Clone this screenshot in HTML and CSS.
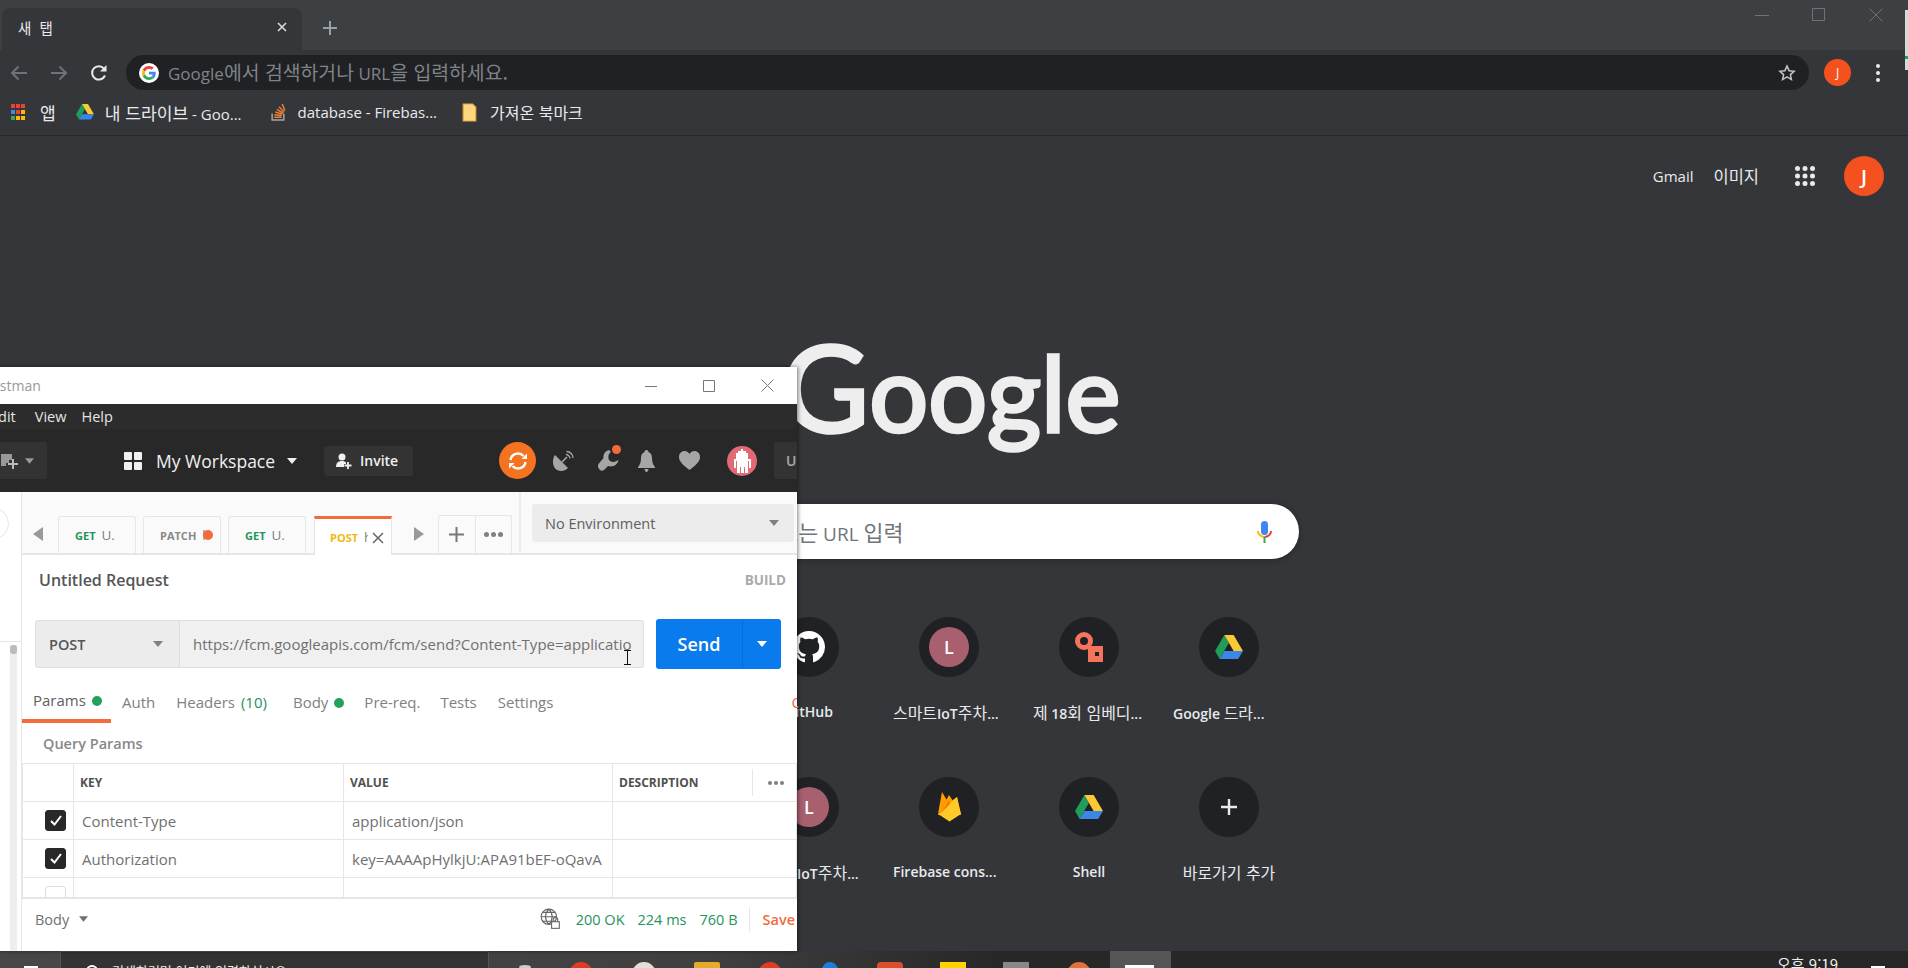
FILE: index.html
```html
<!DOCTYPE html>
<html lang="ko">
<head>
  <meta charset="UTF-8">
  <title>새 탭</title>
  <link rel="stylesheet" href="styles.css">
</head>
<body>

  <svg class="defs" width="0" height="0">
    <symbol id="drive" viewBox="0 0 87 78">
      <path fill="#1e9e5a" d="M29 0 0 50l14 25 29-50z"/>
      <path fill="#fcc934" d="M29 0h29l29 50H58z"/>
      <path fill="#3b87e8" d="M14 75l15-25h58L72 75z"/>
    </symbol>
    <symbol id="caret" viewBox="0 0 10 6">
      <path d="M0 0h10L5 6z"/>
    </symbol>
  </svg>

  <!-- Chrome tab strip -->
  <div class="tabstrip">
    <div class="tab">
      <span class="tab-title">새 탭</span>
      <svg class="tab-close" width="10" height="10" viewBox="0 0 10 10"><path d="M1 1l8 8M9 1 1 9" stroke="#dadce0" stroke-width="1.6"/></svg>
    </div>
    <svg class="new-tab" width="14" height="14" viewBox="0 0 14 14"><path d="M7 0v14M0 7h14" stroke="#9aa0a6" stroke-width="2"/></svg>
    <div class="win-controls">
      <svg width="14" height="14" viewBox="0 0 14 14"><path d="M0 7.500h14" stroke="#6f7276"/></svg>
      <svg width="14" height="14" viewBox="0 0 14 14"><path d="M.5.5h12v12H.5z" fill="none" stroke="#6f7276"/></svg>
      <svg width="14" height="14" viewBox="0 0 14 14"><path d="M.5.5l13 13M13.500.5l-13 13" stroke="#6f7276"/></svg>
    </div>
  </div>

  <!-- Chrome toolbar -->
  <div class="toolbar">
    <svg class="nav-icon" width="18" height="16" viewBox="0 0 18 16"><path d="M17 8H2M8.500 1.500 2 8l6.500 6.500" fill="none" stroke="#6f7276" stroke-width="2"/></svg>
    <svg class="nav-icon fwd" width="18" height="16" viewBox="0 0 18 16"><path d="M1 8h15M9.500 1.500 16 8l-6.500 6.500" fill="none" stroke="#6f7276" stroke-width="2"/></svg>
    <svg class="nav-icon reload" width="18" height="18" viewBox="0 0 18 18"><path d="M15 11.500A6.700 6.700 0 1 1 14 4.600" fill="none" stroke="#e8eaed" stroke-width="2"/><path d="M16.500 1v6.500H10z" fill="#e8eaed"/></svg>
    <div class="omnibox">
      <span class="g-badge">
        <svg width="14" height="14" viewBox="0 0 48 48">
          <path fill="#ea4335" d="M24 9.500c3.500 0 6.700 1.200 9.200 3.600l6.900-6.900C35.900 2.400 30.500 0 24 0 14.600 0 6.500 5.400 2.600 13.200l8 6.200C12.500 13.700 17.800 9.500 24 9.500z"/>
          <path fill="#4285f4" d="M47 24.500c0-1.600-.1-3.100-.4-4.500H24v9h12.900c-.6 3-2.200 5.500-4.700 7.200l7.700 6C44.400 38.600 47 32.100 47 24.500z"/>
          <path fill="#fbbc05" d="M10.600 28.600a14.500 14.500 0 0 1 0-9.200l-8-6.200a24 24 0 0 0 0 21.600z"/>
          <path fill="#34a853" d="M24 48c6.500 0 11.900-2.100 15.900-5.800l-7.700-6c-2.200 1.500-4.900 2.300-8.200 2.300-6.200 0-11.500-4.200-13.400-9.900l-8 6.200C6.500 42.600 14.600 48 24 48z"/>
        </svg>
      </span>
      <span class="omni-text">Google<span class="kr">에서 검색하거나</span> URL<span class="kr">을 입력하세요.</span></span>
      <svg class="star" width="18" height="18" viewBox="0 0 24 24"><path d="M12 2.800l2.800 6.100 6.700.7-5 4.500 1.400 6.600-5.900-3.400-5.900 3.400 1.400-6.600-5-4.500 6.700-.7z" fill="none" stroke="#c4c7c9" stroke-width="2"/></svg>
    </div>
    <span class="profile">J</span>
    <span class="kebab"><i></i><i></i><i></i></span>
  </div>

  <!-- Bookmarks bar -->
  <div class="bookmarks">
    <span class="bm bm-apps">
      <svg width="14" height="16" viewBox="0 0 14 16">
        <path fill="#ea4335" d="M0 0h4v4H0zM5 0h4v4H5zM10 0h4v4h-4z"/>
        <path fill="#4285f4" d="M0 6h4v4H0z"/><path fill="#ea4335" d="M5 6h4v4H5z"/><path fill="#fbbc05" d="M10 6h4v4h-4z"/>
        <path fill="#34a853" d="M0 12h4v4H0z"/><path fill="#fbbc05" d="M5 12h4v4H5zM10 12h4v4h-4z"/>
      </svg>
      <span class="kr">앱</span>
    </span>
    <span class="bm bm-drive"><svg width="18" height="16"><use href="#drive"/></svg><span><span class="kr">내 드라이브</span> - Goo...</span></span>
    <span class="bm bm-stack">
      <svg width="15" height="18" viewBox="0 0 14 17"><path d="M1 10v6h11v-6" fill="none" stroke="#a6a6a6" stroke-width="1.400"/><path d="M3 13.500h7M3.200 11l6.800.8M4 8.500l6.500 2M5.500 6l5.800 3.500M7.500 3.500l4.700 5M10.500 1l2.500 6" stroke="#ef8236" stroke-width="1.400"/></svg>
      <span>database - Firebas...</span>
    </span>
    <span class="bm bm-folder">
      <svg width="15" height="19" viewBox="0 0 14 18"><path d="M1 1h9l3 3v13H1z" fill="#fdd67e" stroke="#e8a93c"/></svg>
      <span class="kr">가져온 북마크</span>
    </span>
  </div>

  <!-- New tab page -->
  <main class="ntp">
    <div class="ntp-top">
      <span class="ntp-link">Gmail</span>
      <span class="ntp-link kr">이미지</span>
      <svg class="ntp-apps" width="20" height="20" viewBox="0 0 20 20" fill="#e8eaed">
        <circle cx="2.500" cy="2.500" r="2.500"/><circle cx="10" cy="2.500" r="2.500"/><circle cx="17.500" cy="2.500" r="2.500"/>
        <circle cx="2.500" cy="10" r="2.500"/><circle cx="10" cy="10" r="2.500"/><circle cx="17.500" cy="10" r="2.500"/>
        <circle cx="2.500" cy="17.500" r="2.500"/><circle cx="10" cy="17.500" r="2.500"/><circle cx="17.500" cy="17.500" r="2.500"/>
      </svg>
      <span class="ntp-avatar">J</span>
    </div>

    <div class="logo"><span class="logo-g">G</span>oogle</div>

    <div class="searchbox">
      <span class="search-text">Google <span class="kr">검색 또는</span> URL <span class="kr">입력</span></span>
      <svg width="15" height="22" viewBox="0 0 15 22">
        <rect x="4" y="0" width="7" height="14" rx="3.500" fill="#4285f4"/>
        <path d="M1 10c0 3.500 3 6 6.500 6" fill="none" stroke="#fbbc05" stroke-width="2"/>
        <path d="M14 10c0 3.500-3 6-6.500 6" fill="none" stroke="#ea4335" stroke-width="2"/>
        <path d="M7.500 16v6" stroke="#34a853" stroke-width="2"/>
      </svg>
    </div>

    <div class="tiles">
      <div class="tile">
        <span class="tile-icon">
          <svg width="32" height="32" viewBox="0 0 16 16" fill="#fff"><path d="M8 0C3.580 0 0 3.580 0 8c0 3.540 2.290 6.530 5.470 7.590.4.070.55-.17.55-.38 0-.19-.01-.82-.01-1.490-2.010.37-2.530-.49-2.690-.94-.09-.23-.48-.94-.82-1.130-.28-.15-.68-.52-.01-.53.63-.01 1.080.58 1.230.82.72 1.210 1.870.87 2.330.66.070-.52.28-.87.51-1.070-1.780-.2-3.640-.89-3.640-3.950 0-.87.31-1.590.82-2.150-.08-.2-.36-1.020.08-2.120 0 0 .67-.21 2.200.82.64-.18 1.320-.27 2-.27.68 0 1.360.09 2 .27 1.530-1.040 2.200-.82 2.200-.82.44 1.100.16 1.920.08 2.120.51.56.82 1.270.82 2.150 0 3.070-1.870 3.750-3.650 3.950.29.25.54.73.54 1.480 0 1.070-.01 1.930-.01 2.200 0 .21.15.46.55.38A8.013 8.013 0 0016 8c0-4.420-3.580-8-8-8z"/></svg>
        </span>
        <span class="tile-label">GitHub</span>
      </div>
      <div class="tile">
        <span class="tile-icon"><span class="letter">L</span></span>
        <span class="tile-label long"><span class="kr">스마트</span>IoT<span class="kr">주차</span>...</span>
      </div>
      <div class="tile">
        <span class="tile-icon">
          <svg width="28" height="30" viewBox="0 0 28 30"><circle cx="9" cy="9" r="6.500" fill="none" stroke="#f4745c" stroke-width="5"/><path d="M12 14l6 4" stroke="#f4745c" stroke-width="5"/><path fill="#f4745c" fill-rule="evenodd" d="M13 14h15v16H13zm7 6v4h4v-4z"/></svg>
        </span>
        <span class="tile-label long"><span class="kr">제</span> 18<span class="kr">회 임베디</span>...</span>
      </div>
      <div class="tile">
        <span class="tile-icon"><svg width="28" height="25"><use href="#drive"/></svg></span>
        <span class="tile-label long">Google <span class="kr">드라</span>...</span>
      </div>
      <div class="tile">
        <span class="tile-icon"><span class="letter">L</span></span>
        <span class="tile-label long"><span class="kr">스마트</span>IoT<span class="kr">주차</span>...</span>
      </div>
      <div class="tile">
        <span class="tile-icon">
          <svg width="23" height="30" viewBox="0 0 23 30"><path fill="#ffa000" d="M0 22 4 0l6 10z"/><path fill="#f57c00" d="M11 12 8.500 7 0 23z"/><path fill="#ffa000" d="M0 23 11 3l4 6 4-4 4 18z"/><path fill="#f57c00" d="M3 21 11 8l1 5-8 10z"/><path fill="#ffca28" d="M0 22l3-1 8-8 4-5 4-3 4 17-11.500 7.500z"/></svg>
        </span>
        <span class="tile-label long">Firebase cons...</span>
      </div>
      <div class="tile">
        <span class="tile-icon"><svg width="28" height="25"><use href="#drive"/></svg></span>
        <span class="tile-label">Shell</span>
      </div>
      <div class="tile">
        <span class="tile-icon"><svg width="16" height="16" viewBox="0 0 16 16"><path d="M8 0v16M0 8h16" stroke="#e8eaed" stroke-width="2.400"/></svg></span>
        <span class="tile-label"><span class="kr">바로가기 추가</span></span>
      </div>
    </div>
  </main>

  <!-- Windows taskbar, cut off by the bottom of the screen -->
  <div class="taskbar">
    <span class="start"></span>
    <div class="task-search"><span class="task-circle"></span>검색하려면 여기에 입력하십시오.</div>
    <span class="task-icon t-gray"></span>
    <span class="task-icon t-red"></span>
    <span class="task-icon t-white"></span>
    <span class="task-icon t-folder"></span>
    <span class="task-icon t-red"></span>
    <span class="task-icon t-blue"></span>
    <span class="task-icon t-orange"></span>
    <span class="task-icon t-yellow"></span>
    <span class="task-icon t-silver"></span>
    <span class="task-icon t-peach"></span>
    <span class="task-active"><i></i></span>
    <span class="task-clock">오후 9:19</span>
    <span class="task-notify"></span>
  </div>

  <div class="edge-strip"></div>

  <!-- Postman window, dragged partly off the left of the screen -->
  <section class="pm">
    <div class="pm-title">
      <span class="pm-name">Postman</span>
      <div class="pm-controls">
        <svg width="12" height="12" viewBox="0 0 12 12"><path d="M0 6.500h12" stroke="#777"/></svg>
        <svg width="12" height="12" viewBox="0 0 12 12"><path d="M.5.5h11v11H.5z" fill="none" stroke="#777"/></svg>
        <svg width="13" height="13" viewBox="0 0 13 13"><path d="M.5.5l12 12M12.500.5l-12 12" stroke="#777"/></svg>
      </div>
    </div>

    <div class="pm-menu">
      <span>Edit</span><span>View</span><span>Help</span>
    </div>

    <div class="pm-head">
      <div class="new-btn">
        <svg width="18" height="18" viewBox="0 0 18 18"><path fill="#999" d="M0 2h11v6H8v3H5v3H0z"/><path d="M12 7v10M7 12h10" stroke="#bbb" stroke-width="2"/></svg>
        <svg class="car" width="9" height="6"><use href="#caret"/></svg>
      </div>
      <svg class="ws-icon" width="18" height="18" viewBox="0 0 18 18" fill="#f0f0f0"><rect width="8" height="8" rx="1"/><rect x="10" width="8" height="8" rx="1"/><rect y="10" width="8" height="8" rx="1"/><rect x="10" y="10" width="8" height="8" rx="1"/></svg>
      <span class="ws-name">My Workspace</span>
      <svg class="car ws-car" width="10" height="6"><use href="#caret"/></svg>
      <div class="invite">
        <svg width="16" height="16" viewBox="0 0 16 16" fill="#f0f0f0"><circle cx="6" cy="4" r="3.500"/><path d="M0 14c0-4 2-6 6-6 2 0 3 .5 4 1.500V11H8v3z"/><path d="M12 9v7M8.500 12.500h7" stroke="#f0f0f0" stroke-width="1.800"/></svg>
        Invite
      </div>
      <span class="sync">
        <svg width="22" height="22" viewBox="0 0 22 22" fill="none" stroke="#fff" stroke-width="2.400"><path d="M3.500 10a7.500 7.500 0 0 1 13-4"/><path d="M18.500 12a7.500 7.500 0 0 1-13 4"/><path d="M20 3.500v5.500h-5.500z" fill="#fff" stroke="none"/><path d="M2 18.500V13h5.500z" fill="#fff" stroke="none"/></svg>
      </span>
      <svg class="hd-icon sat" width="22" height="22" viewBox="0 0 22 22" fill="#a6a6a6"><path d="M2 5l13 13c-2 2-4 3-7 3-5 0-8-4-8-9 0-3 .5-5 2-7z"/><path d="M9 12l5-5" stroke="#a6a6a6" stroke-width="1.600"/><path d="M13 4.500c2 0 4 2 4 4M13.500 1.500c4 0 6.500 3 6.500 6.500" fill="none" stroke="#a6a6a6" stroke-width="1.300"/></svg>
      <span class="wrench">
        <svg width="21" height="22" viewBox="0 0 21 22" fill="#a6a6a6"><path d="M11 0c-4 1-6 4-5.500 8L.5 14c-1 1.500-.5 4 1 5.500s3 1.500 4.500.5l4-4c5 1.500 9.500-1 10.500-6l-3 1.500c-3 1-6.500 0-7-3S11 3 13 2z"/></svg>
        <i></i>
      </span>
      <svg class="hd-icon bell" width="17" height="22" viewBox="0 0 17 22" fill="#a6a6a6"><path d="M8.500 0C10 0 10.500 1 10.500 2 13 3 14 5 14 8c0 4 1 7 3 9v1H0v-1c2-2 3-5 3-9 0-3 1-5 3.500-6 0-1 .5-2 2-2z"/><path d="M6.500 19h4c0 1.500-1 3-2 3s-2-1.500-2-3z"/></svg>
      <svg class="hd-icon heart" width="21" height="19" viewBox="0 0 21 19" fill="#a6a6a6"><path d="M10.500 19C4 14 0 10.500 0 6c0-3.500 2.500-6 5.500-6 2 0 4 1 5 3 1-2 3-3 5-3 3 0 5.500 2.500 5.500 6 0 4.500-4 8-10.500 13z"/></svg>
      <span class="robot">
        <svg width="18" height="24" viewBox="0 0 18 24" fill="#fff"><path d="M8 0h2v2h3v2h2v6h3v9h-2v-7h-1v12h-3v-6h-1v6H8v-6H7v6H4V12H3v7H1v-9h2V4h2V2h3z"/></svg>
      </span>
      <span class="upgrade">Upgrade</span>
    </div>

    <div class="pm-main">
      <aside class="pm-side">
        <span class="side-circle"></span>
        <span class="side-line"></span>
        <span class="side-scroll"><i></i></span>
      </aside>

      <div class="pm-work">
        <div class="pm-tabs">
          <svg class="tab-arrow" width="10" height="14" viewBox="0 0 10 14"><path d="M10 0v14L0 7z" fill="#999"/></svg>
          <span class="rtab"><b class="get">GET</b> U.</span>
          <span class="rtab"><b class="patch">PATCH</b> <span class="cut">h</span><i class="dot"></i></span>
          <span class="rtab"><b class="get">GET</b> U.</span>
          <span class="rtab active"><b class="post">POST</b> <span class="cut">h</span>
            <svg class="rtab-x" width="12" height="12" viewBox="0 0 12 12"><path d="M1 1l10 10M11 1 1 11" stroke="#666" stroke-width="1.500"/></svg>
          </span>
          <svg class="tab-arrow next" width="10" height="14" viewBox="0 0 10 14"><path d="M0 0v14l10-7z" fill="#999"/></svg>
          <div class="tab-tools">
            <span><svg width="15" height="15" viewBox="0 0 15 15"><path d="M7.500 0v15M0 7.500h15" stroke="#777" stroke-width="2"/></svg></span>
            <span class="tool-dots"><i></i><i></i><i></i></span>
          </div>
          <div class="env-wrap">
            <div class="env">No Environment<svg class="car" width="10" height="6"><use href="#caret"/></svg></div>
          </div>
        </div>

        <div class="req-head">
          <span class="req-name">Untitled Request</span>
          <span class="req-build">BUILD</span>
        </div>

        <div class="req-bar">
          <div class="req-method">POST<svg class="car" width="10" height="6"><use href="#caret"/></svg></div>
          <div class="req-url">https://fcm.googleapis.com/fcm/send?Content-Type=applicatio</div>
          <div class="send"><span class="send-label">Send</span><span class="send-more"><svg width="10" height="6"><use href="#caret"/></svg></span></div>
        </div>

        <div class="req-tabs">
          <span class="rq active">Params <i class="gdot"></i></span>
          <span class="rq">Auth</span>
          <span class="rq">Headers <em>(10)</em></span>
          <span class="rq">Body <i class="gdot"></i></span>
          <span class="rq">Pre-req.</span>
          <span class="rq">Tests</span>
          <span class="rq">Settings</span>
          <span class="rq cookies">Cookies</span>
        </div>

        <div class="query-title">Query Params</div>

        <div class="table-wrap">
          <table class="params">
            <colgroup><col class="c-check"><col class="c-key"><col class="c-value"><col></colgroup>
            <thead>
              <tr>
                <th></th><th>KEY</th><th>VALUE</th>
                <th><div class="th-desc">DESCRIPTION<span class="th-dots"><i></i><i></i><i></i></span></div></th>
              </tr>
            </thead>
            <tbody>
              <tr>
                <td><span class="check on"><svg width="12" height="11" viewBox="0 0 12 11"><path d="M1 6l3.500 3.500L11 1" fill="none" stroke="#fff" stroke-width="2"/></svg></span></td>
                <td>Content-Type</td><td>application/json</td><td></td>
              </tr>
              <tr>
                <td><span class="check on"><svg width="12" height="11" viewBox="0 0 12 11"><path d="M1 6l3.500 3.500L11 1" fill="none" stroke="#fff" stroke-width="2"/></svg></span></td>
                <td>Authorization</td><td>key=AAAApHylkjU:APA91bEF-oQavA</td><td></td>
              </tr>
              <tr>
                <td><span class="check"></span></td><td></td><td></td><td></td>
              </tr>
            </tbody>
          </table>
        </div>

        <div class="res-bar">
          <span class="res-body">Body<svg class="car" width="9" height="6"><use href="#caret"/></svg></span>
          <svg class="res-globe" width="21" height="22" viewBox="0 0 19 20" fill="none" stroke="#666"><circle cx="8" cy="8" r="7"/><path d="M1 8h14M2 4h12M2 12h12M8 1c-4 4-4 10 0 14M8 1c4 4 4 10 0 14"/><rect x="10.500" y="12.500" width="7" height="6" fill="#fff"/><path d="M12 12.500v-2a2 2 0 0 1 4 0v2"/></svg>
          <span class="res-stat">200 OK</span>
          <span class="res-stat">224 ms</span>
          <span class="res-stat">760 B</span>
          <span class="res-save">Save</span>
        </div>
      </div>
    </div>
  </section>

  <svg class="ibeam" width="9" height="15" viewBox="0 0 9 15"><path d="M1 .5h7M4.500.5v14M1 14.500h7" stroke="#111"/></svg>

</body>
</html>
```

FILE: styles.css
```css
* {
  box-sizing: border-box;
}

html, body {
  margin: 0;
  height: 100%;
}

body {
  position: relative;
  display: flex;
  flex-direction: column;
  overflow: hidden;
  background-color: #35363a;
  font-family: "Open Sans", "Noto Sans CJK KR", sans-serif;
  color: #e8eaed;
}

.defs {
  position: absolute;
}

i {
  display: block;
}

/* Korean glyphs sit a bit larger next to the latin ones */
.kr {
  font-family: "Noto Sans CJK KR", sans-serif;
  font-size: 1.14em;
  font-weight: 400;
}

/* Chrome */
.tabstrip {
  display: flex;
  align-items: flex-end;
  height: 50px;
  flex-shrink: 0;
  background-color: #3d4043;
  position: relative;
}

.tab {
  display: flex;
  align-items: center;
  justify-content: space-between;
  width: 300px;
  height: 42px;
  margin-left: 2px;
  padding: 0 15px 4px 16px;
  background-color: #35363a;
  border-radius: 8px 8px 0 0;
  font-family: "Noto Sans CJK KR", sans-serif;
  font-size: 14.500px;
  letter-spacing: 2px;
}

.new-tab {
  margin: 0 0 15px 21px;
}

.win-controls {
  display: flex;
  gap: 43px;
  margin-left: auto;
  margin-right: 25px;
  align-self: flex-start;
  margin-top: 8px;
}

.toolbar {
  display: flex;
  align-items: center;
  height: 45px;
  flex-shrink: 0;
}

.nav-icon {
  margin-left: 10px;
}

.nav-icon.fwd {
  margin-left: 22px;
}

.nav-icon.reload {
  margin-left: 22px;
}

.omnibox {
  display: flex;
  align-items: center;
  width: 1683px;
  height: 35px;
  margin-left: 18px;
  padding: 0 13px 0 13px;
  background-color: #202124;
  border-radius: 18px;
}

.g-badge {
  display: flex;
  align-items: center;
  justify-content: center;
  width: 20px;
  height: 20px;
  background-color: #fff;
  border-radius: 50%;
}

.omni-text {
  margin-left: 9px;
  margin-top: -2px;
  font-size: 17px;
  color: #7f8488;
  white-space: nowrap;
}

.star {
  margin-left: auto;
}

.profile {
  display: flex;
  align-items: center;
  justify-content: center;
  width: 27px;
  height: 27px;
  margin-left: 15px;
  background-color: #f4511e;
  border-radius: 50%;
  font-size: 12px;
  color: #fff;
}

.kebab {
  display: flex;
  flex-direction: column;
  gap: 3px;
  margin-left: 25px;
}

.kebab i {
  width: 4px;
  height: 4px;
  background-color: #e8eaed;
  border-radius: 50%;
}

.bookmarks {
  display: flex;
  align-items: center;
  height: 41px;
  flex-shrink: 0;
  padding-bottom: 6px;
  border-bottom: 1px solid #28292c;
  font-size: 15px;
  color: #e8eaed;
}

.bm {
  display: flex;
  align-items: center;
}

.bm-apps {
  gap: 15px;
  margin-left: 11px;
}

.bm-drive {
  gap: 11px;
  margin-left: 20px;
}

.bm-stack {
  gap: 12px;
  margin-left: 29px;
}

.bm-folder {
  gap: 13px;
  margin-left: 25px;
}

.bm-folder .kr {
  font-size: 16px;
}

/* New tab page */
.ntp {
  flex: 1;
  display: flex;
  flex-direction: column;
  align-items: center;
  width: 1898px;
  min-height: 0;
}

.ntp-top {
  display: flex;
  align-items: center;
  align-self: flex-end;
  height: 40px;
  margin-top: 20px;
  margin-right: 14px;
  font-size: 15px;
}

.ntp-link {
  margin-right: 20px;
}

.ntp-link.kr {
  font-size: 16.500px;
  margin-right: 36px;
}

.ntp-apps {
  margin-right: 29px;
}

.ntp-avatar {
  display: flex;
  align-items: center;
  justify-content: center;
  width: 40px;
  height: 40px;
  background-color: #f4511e;
  border-radius: 50%;
  font-size: 20px;
  font-weight: 600;
  color: #fff;
}

.logo {
  height: 140px;
  margin-top: 120px;
  margin-left: 4px;
  font-family: Lato, sans-serif;
  font-size: 104px;
  line-height: 140px;
  color: #eee;
  white-space: nowrap;
  -webkit-text-stroke: 3.500px #eee;
}

.logo-g {
  font-size: 120px;
}

.searchbox {
  display: flex;
  align-items: center;
  justify-content: space-between;
  width: 700px;
  height: 55px;
  margin-top: 48px;
  padding: 0 27px 0 0;
  background-color: #fff;
  border-radius: 28px;
  box-shadow: 0 1px 6px rgba(0, 0, 0, 0.3);
}

.search-text {
  margin-left: 66px;
  font-size: 19px;
  color: #70757a;
}

.tiles {
  display: grid;
  grid-template-columns: repeat(4, 140px);
  grid-auto-rows: 160px;
  margin-top: 58px;
  margin-left: 140px;
}

.tile {
  display: flex;
  flex-direction: column;
  align-items: center;
}

.tile-icon {
  display: flex;
  align-items: center;
  justify-content: center;
  width: 60px;
  height: 60px;
  background-color: #202124;
  border-radius: 50%;
}

.letter {
  display: flex;
  align-items: center;
  justify-content: center;
  width: 40px;
  height: 40px;
  background-color: #a85f6e;
  border-radius: 50%;
  font-size: 18px;
  font-weight: 600;
  color: #fff;
}

.tile-label {
  width: 112px;
  margin-top: 25px;
  font-size: 14px;
  font-weight: 600;
  line-height: 20px;
  text-align: center;
  white-space: nowrap;
  color: #e8eaed;
}

.tile-label.long {
  text-align: left;
}

/* Taskbar */
.taskbar {
  display: flex;
  height: 17px;
  flex-shrink: 0;
  overflow: hidden;
  background: linear-gradient(to right, #474747, #404040 700px, #272727 1000px);
  font-family: "Noto Sans CJK KR", sans-serif;
  font-size: 13px;
  color: #eee;
}

.start {
  width: 14px;
  height: 12px;
  margin: 15px 0 0 24px;
  background-color: #fff;
}

.task-search {
  display: flex;
  gap: 14px;
  flex-shrink: 0;
  width: 429px;
  height: 40px;
  margin-left: 22px;
  padding: 10px 0 0 25px;
  background-color: #333;
  border: 1px solid #555;
  line-height: 18px;
}

.task-circle {
  width: 12px;
  height: 12px;
  margin-top: 3px;
  border: 2px solid #fff;
  border-radius: 50%;
}

.task-icon {
  flex-shrink: 0;
  width: 26px;
  height: 30px;
  margin: 11px 0 0 37px;
  border-radius: 50%;
}

.t-gray {
  width: 12px;
  height: 4px;
  margin: 14px 0 0 30px;
  background-color: #ccc;
}

.t-red {
  background-color: #dd3c26;
}

.t-white {
  background-color: #e8dcd8;
}

.t-folder {
  border-radius: 2px;
  background-color: #e3ab2c;
}

.t-blue {
  width: 20px;
  background-color: #1a7fdc;
}

.t-orange {
  border-radius: 4px;
  background-color: #d94f2c;
}

.t-yellow {
  border-radius: 0;
  background-color: #ffd200;
}

.t-silver {
  border-radius: 0;
  background-color: #888;
}

.t-peach {
  background-color: #e2713a;
}

.task-active {
  flex-shrink: 0;
  width: 61px;
  margin-left: 18px;
  padding: 14px 0 0 15px;
  background-color: #555;
}

.task-active i {
  width: 29px;
  height: 20px;
  background-color: #fff;
}

.task-clock {
  flex-shrink: 0;
  margin-left: 606px;
  font-size: 15px;
  line-height: 26px;
  white-space: nowrap;
}

.task-notify {
  flex-shrink: 0;
  width: 14px;
  height: 14px;
  margin: 15px 0 0 33px;
  background-color: #fff;
}

.edge-strip {
  position: absolute;
  top: 10px;
  right: 0;
  width: 3px;
  height: 60px;
  background: linear-gradient(#d8d8d8 76%, #1aa260 76%, #1aa260 82%, #d8d8d8 82%);
}

/* Postman window */
.pm {
  position: absolute;
  top: 367px;
  left: -40px;
  display: flex;
  flex-direction: column;
  width: 837px;
  height: 584px;
  overflow: hidden;
  background-color: #fff;
  box-shadow: 1px 0 4px rgba(0, 0, 0, 0.5);
  color: #505050;
}

.car {
  fill: currentColor;
}

.pm-title {
  display: flex;
  align-items: center;
  height: 37px;
  flex-shrink: 0;
  padding-left: 23px;
  font-size: 14px;
  color: #999;
}

.pm-controls {
  display: flex;
  align-items: center;
  gap: 46px;
  margin-left: auto;
  margin-right: 23px;
}

.pm-menu {
  display: flex;
  align-items: center;
  gap: 15px;
  height: 25px;
  flex-shrink: 0;
  padding-left: 30px;
  background-color: #2c2c2d;
  font-size: 14.500px;
  color: #e4e4e4;
}

.pm-menu span:first-child {
  margin-right: 4px;
}

.pm-head {
  display: flex;
  align-items: center;
  height: 63px;
  flex-shrink: 0;
  background-color: #282828;
  color: #f0f0f0;
}

.pm-head > * {
  flex-shrink: 0;
}

.new-btn {
  display: flex;
  align-items: center;
  gap: 6px;
  width: 67px;
  height: 37px;
  margin-left: 20px;
  padding-left: 21px;
  background-color: #333;
  border-radius: 3px;
  color: #999;
}

.ws-icon {
  margin-left: 77px;
}

.ws-name {
  width: 119px;
  margin-left: 14px;
  font-size: 17.500px;
  white-space: nowrap;
}

.ws-car {
  margin-left: 12px;
}

.invite {
  display: flex;
  align-items: center;
  gap: 8px;
  width: 89px;
  height: 30px;
  margin-left: 27px;
  padding-left: 12px;
  background-color: #333;
  border-radius: 3px;
  font-size: 14px;
  font-weight: 600;
}

.sync {
  display: flex;
  align-items: center;
  justify-content: center;
  width: 37px;
  height: 37px;
  margin-left: 86px;
  background-color: #f47321;
  border-radius: 50%;
}

.hd-icon.sat {
  margin-left: 17px;
}

.wrench {
  position: relative;
  height: 22px;
  margin-left: 23px;
}

.wrench i {
  position: absolute;
  top: -5px;
  right: -2px;
  width: 9px;
  height: 9px;
  background-color: #f26b3a;
  border-radius: 50%;
}

.hd-icon.bell {
  margin-left: 19px;
}

.hd-icon.heart {
  margin-left: 24px;
}

.robot {
  display: flex;
  align-items: center;
  justify-content: center;
  width: 30px;
  height: 30px;
  margin-left: 27px;
  overflow: hidden;
  background-color: #e16a75;
  border-radius: 50%;
}

.upgrade {
  width: 110px;
  height: 37px;
  margin-left: 17px;
  padding-left: 12px;
  background-color: #333;
  border-radius: 3px;
  font-size: 14px;
  font-weight: 600;
  line-height: 37px;
  color: #aaa;
}

.pm-main {
  flex: 1;
  display: flex;
  min-height: 0;
}

.pm-side {
  display: flex;
  flex-direction: column;
  flex-shrink: 0;
  width: 62px;
  border-right: 1px solid #e6e6e6;
}

.side-circle {
  width: 33px;
  height: 33px;
  margin: 15px 0 0 16px;
  border: 1px solid #e6e6e6;
  border-radius: 50%;
}

.side-line {
  height: 1px;
  margin-top: 101px;
  background-color: #e6e6e6;
}

.side-scroll {
  flex: 1;
  width: 7px;
  margin: 3px 0 0 50px;
  background-color: #eee;
}

.side-scroll i {
  height: 9px;
  background-color: #bbb;
  border-radius: 3px;
}

.pm-work {
  flex: 1;
  display: flex;
  flex-direction: column;
  min-width: 0;
}

.pm-tabs {
  display: flex;
  align-items: flex-end;
  height: 63px;
  flex-shrink: 0;
  background-color: #fafafa;
  border-bottom: 2px solid #e6e6e6;
}

.tab-arrow {
  margin: 0 0 12px 11px;
}

.rtab {
  position: relative;
  display: flex;
  align-items: center;
  gap: 6px;
  width: 78px;
  height: 37px;
  margin-left: 7px;
  padding-left: 16px;
  overflow: hidden;
  border: 1px solid #e6e6e6;
  border-bottom: 0;
  border-radius: 3px 3px 0 0;
  font-size: 13.500px;
  color: #808080;
  white-space: nowrap;
}

.rtab:nth-of-type(1) {
  margin-left: 15px;
}

.rtab b {
  font-size: 11px;
  font-weight: 700;
}

.rtab .get {
  color: #26935a;
}

.rtab .patch {
  color: #888;
}

.rtab .post {
  color: #f5b60d;
}

.rtab .cut {
  width: 4px;
  overflow: hidden;
}

.rtab .dot {
  position: absolute;
  top: 13px;
  right: 7px;
  width: 10px;
  height: 10px;
  background-color: #f26b3a;
  border-radius: 50%;
}

.rtab.active {
  height: 39px;
  margin-bottom: -2px;
  margin-left: 8px;
  padding-left: 15px;
  background-color: #fff;
  border-top: 3px solid #f26b3a;
  border-radius: 0;
}

.rtab-x {
  position: absolute;
  top: 13px;
  right: 7px;
}

.tab-arrow.next {
  margin-left: 22px;
  margin-right: 14px;
}

.tab-tools {
  display: flex;
  width: 74px;
  height: 38px;
  flex-shrink: 0;
  border: 1px solid #e6e6e6;
  border-bottom: 0;
  border-radius: 3px 3px 0 0;
}

.tab-tools span {
  display: flex;
  align-items: center;
  justify-content: center;
  flex: 1;
}

.tab-tools span + span {
  border-left: 1px solid #e6e6e6;
}

.tool-dots {
  gap: 2px;
}

.tool-dots i {
  width: 5px;
  height: 5px;
  background-color: #808080;
  border-radius: 50%;
}

.env-wrap {
  align-self: stretch;
  margin-left: 7px;
  padding: 12px 3px 0 11px;
  flex: 1;
  border-left: 2px solid #ececec;
}

.env {
  display: flex;
  align-items: center;
  justify-content: space-between;
  height: 38px;
  padding: 0 15px 0 13px;
  background-color: #ececec;
  border-radius: 3px;
  font-size: 14.500px;
  color: #606060;
}

.env .car {
  color: #808080;
}

.req-head {
  display: flex;
  align-items: center;
  justify-content: space-between;
  height: 50px;
  flex-shrink: 0;
  padding: 0 11px 0 17px;
  margin-top: 0;
}

.req-name {
  font-size: 16px;
  font-weight: 600;
  color: #555;
}

.req-build {
  font-size: 13.500px;
  font-weight: 700;
  color: #aaa;
}

.req-bar {
  display: flex;
  height: 50px;
  flex-shrink: 0;
  margin: 14px 16px 0 13px;
  font-size: 15px;
}

.req-method {
  display: flex;
  align-items: center;
  justify-content: space-between;
  width: 145px;
  height: 48px;
  margin-top: 1px;
  padding: 0 16px 0 13px;
  background-color: #ececec;
  border: 1px solid #ddd;
  border-radius: 3px 0 0 3px;
  font-size: 14.500px;
  font-weight: 600;
  color: #555;
}

.req-method .car {
  color: #808080;
}

.req-url {
  width: 464px;
  height: 48px;
  margin-top: 1px;
  padding-left: 13px;
  overflow: hidden;
  background-color: #f0f0f0;
  border: 1px solid #ddd;
  border-left: 0;
  border-radius: 0 3px 3px 0;
  line-height: 46px;
  color: #707070;
  white-space: nowrap;
}

.send {
  display: flex;
  width: 125px;
  margin-left: 12px;
  background-color: #097bed;
  border-radius: 3px;
  color: #fff;
}

.send-label {
  display: flex;
  align-items: center;
  justify-content: center;
  width: 87px;
  font-size: 18px;
  font-weight: 600;
  border-right: 1px solid #0a6fd5;
}

.send-more {
  display: flex;
  align-items: center;
  justify-content: center;
  flex: 1;
}

.send-more svg {
  fill: #fff;
}

.req-tabs {
  position: relative;
  display: flex;
  align-items: center;
  height: 39px;
  flex-shrink: 0;
  margin-top: 15px;
  font-size: 15px;
  color: #808080;
}

.rq {
  display: flex;
  align-items: center;
  gap: 6px;
  flex-shrink: 0;
  height: 39px;
  padding-bottom: 3px;
  white-space: nowrap;
}

.rq em {
  font-style: normal;
  color: #26935a;
}

.rq.active {
  width: 89px;
  padding-left: 11px;
  border-bottom: 4px solid #f26b3a;
  color: #606060;
}

.gdot {
  width: 10px;
  height: 10px;
  margin-top: 2px;
  background-color: #26a05d;
  border-radius: 50%;
}

.rq:nth-child(2) {
  margin-left: 11px;
}

.rq:nth-child(3) {
  margin-left: 21px;
}

.rq:nth-child(4) {
  margin-left: 26px;
}

.rq:nth-child(5) {
  margin-left: 20px;
}

.rq:nth-child(6) {
  margin-left: 20px;
}

.rq:nth-child(7) {
  margin-left: 21px;
}

.rq.cookies {
  margin-left: 238px;
  color: #f26b3a;
}

.query-title {
  height: 40px;
  flex-shrink: 0;
  padding-left: 21px;
  font-size: 14.500px;
  font-weight: 600;
  line-height: 42px;
  color: #888;
}

.table-wrap {
  height: 136px;
  flex-shrink: 0;
  overflow: hidden;
  border-bottom: 2px solid #e6e6e6;
}

.params {
  width: 775px;
  table-layout: fixed;
  border-collapse: collapse;
  font-size: 15px;
  color: #707070;
}

.c-check {
  width: 51px;
}

.c-key {
  width: 270px;
}

.c-value {
  width: 269px;
}

.params th,
.params td {
  height: 38px;
  padding: 0 8px;
  border: 1px solid #e6e6e6;
  text-align: left;
}

.params th {
  padding-left: 6px;
  font-size: 12px;
  font-weight: 700;
  color: #505050;
}

.params td:first-child {
  padding: 0 0 0 22px;
}

.th-desc {
  display: flex;
  align-items: center;
  justify-content: space-between;
  height: 27px;
}

.th-dots {
  display: flex;
  align-items: center;
  gap: 2px;
  width: 36px;
  height: 27px;
  padding-left: 15px;
  border-left: 1px solid #e6e6e6;
}

.th-dots i {
  width: 4px;
  height: 4px;
  background-color: #808080;
  border-radius: 50%;
}

.check {
  display: flex;
  align-items: center;
  justify-content: center;
  width: 21px;
  height: 21px;
  border: 1px solid #ddd;
  border-radius: 3px;
  background-color: #fff;
}

.check.on {
  border-color: #282828;
  background-color: #282828;
}

.res-bar {
  flex: 1;
  display: flex;
  align-items: center;
  padding: 0 2px 12px 13px;
  font-size: 14.500px;
  color: #26935a;
}

.res-body {
  display: flex;
  align-items: center;
  gap: 10px;
  color: #707070;
}

.res-globe {
  margin-left: auto;
  margin-right: 2px;
}

.res-stat {
  margin-left: 13px;
  white-space: nowrap;
}

.res-save {
  margin-left: 11px;
  padding: 3px 0 3px 13px;
  border-left: 1px solid #e6e6e6;
  color: #f26b3a;
  font-weight: 600;
}

.ibeam {
  position: absolute;
  top: 650px;
  left: 623px;
}
```
